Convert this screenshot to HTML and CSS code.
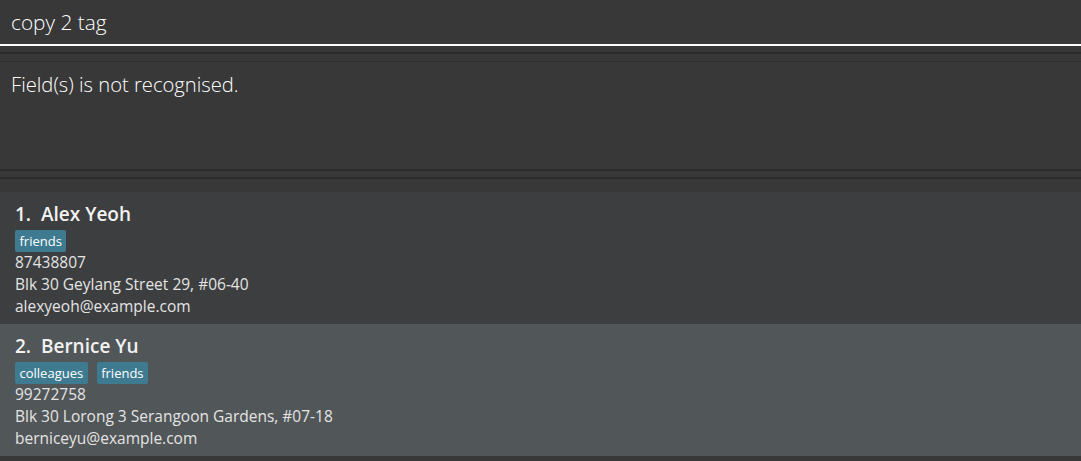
FILE: index.html
```html
<!DOCTYPE html>
<html>
<head>
<meta charset="utf-8">
<link rel="stylesheet" href="styles.css">
</head>
<body>
<div class="app">
  <div class="command">copy 2 tag</div>
  <div class="pane-gap"></div>
  <div class="pane-line-thick"></div>
  <div class="result">Field(s) is not recognised.</div>
  <div class="pane-gap"></div>
  <div class="pane-list-top"></div>
  <div class="list">
    <div class="card card-even">
      <div class="name">1.&nbsp;&nbsp;Alex Yeoh</div>
      <div class="tags"><span class="tag">friends</span></div>
      <div class="detail">87438807</div>
      <div class="detail">Blk 30 Geylang Street 29, #06-40</div>
      <div class="detail">alexyeoh@example.com</div>
    </div>
    <div class="card card-odd">
      <div class="name">2.&nbsp;&nbsp;Bernice Yu</div>
      <div class="tags"><span class="tag">colleagues</span><span class="tag">friends</span></div>
      <div class="detail">99272758</div>
      <div class="detail">Blk 30 Lorong 3 Serangoon Gardens, #07-18</div>
      <div class="detail">berniceyu@example.com</div>
    </div>
  </div>
</div>
</body>
</html>
```
FILE: styles.css
```css
html, body {
  margin: 0;
  padding: 0;
  background: #383838;
}
.app {
  display: flex;
  flex-direction: column;
  width: 1081px;
  height: 461px;
  overflow: hidden;
  font-family: "Open Sans", "Noto Sans", sans-serif;
}
.command {
  box-sizing: border-box;
  height: 46px;
  border-bottom: 2px solid #ffffff;
  padding: 8px 0 0 11px;
  font-size: 20.8px;
  font-weight: 300;
  color: #ffffff;
  line-height: 28px;
}
.pane-gap {
  height: 6px;
}
.pane-line-thick {
  border-top: 2px solid #2b2b2b;
  height: 7px;
}
.result {
  box-sizing: border-box;
  height: 110px;
  border-top: 1px solid #2e2e2e;
  border-bottom: 2px solid #2b2b2b;
  padding: 8px 0 0 11px;
  font-size: 20.2px;
  font-weight: 300;
  color: #ffffff;
  line-height: 28px;
}
.pane-list-top {
  border-top: 2px solid #2b2b2b;
  height: 13px;
}
.list {
  display: flex;
  flex-direction: column;
}
.card {
  box-sizing: border-box;
  height: 132px;
  padding: 9px 0 0 15px;
  color: #ffffff;
}
.card-even {
  background: #3c3e3f;
}
.card-odd {
  background: #515658;
}
.name {
  font-size: 19px;
  font-weight: 600;
  line-height: 26px;
  color: #f2f2f2;
}
.tags {
  display: flex;
  gap: 9px;
  margin-top: 3px;
  height: 21px;
}
.tag {
  background: #3e7b91;
  border-radius: 2px;
  padding: 0 4.5px;
  font-size: 13px;
  line-height: 22px;
  height: 22px;
  color: #ffffff;
}
.detail {
  font-size: 15.5px;
  line-height: 22px;
  color: #e4e4e4;
}
```
